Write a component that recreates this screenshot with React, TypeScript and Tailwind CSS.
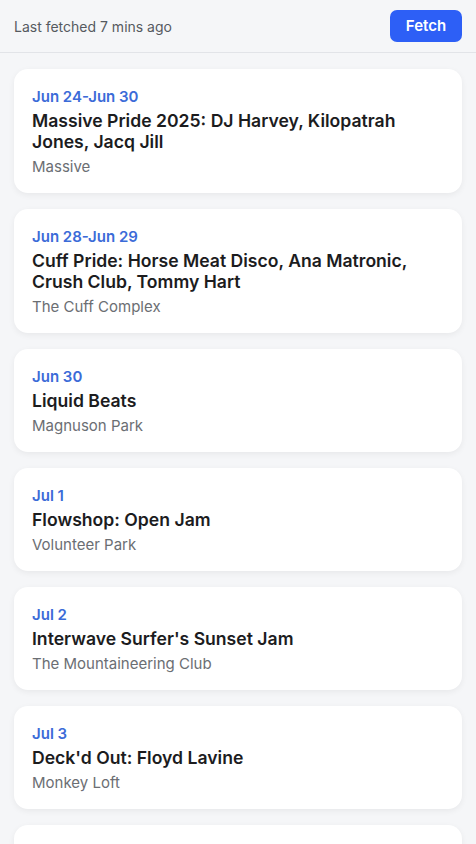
import React from "react";

const events = [
  { date: "Jun 24-Jun 30", title: "Massive Pride 2025: DJ Harvey, Kilopatrah Jones, Jacq Jill", venue: "Massive" },
  { date: "Jun 28-Jun 29", title: "Cuff Pride: Horse Meat Disco, Ana Matronic, Crush Club, Tommy Hart", venue: "The Cuff Complex" },
  { date: "Jun 30", title: "Liquid Beats", venue: "Magnuson Park" },
  { date: "Jul 1", title: "Flowshop: Open Jam", venue: "Volunteer Park" },
  { date: "Jul 2", title: "Interwave Surfer's Sunset Jam", venue: "The Mountaineering Club" },
  { date: "Jul 3", title: "Deck'd Out: Floyd Lavine", venue: "Monkey Loft" },
  { date: "Jul 4", title: "Independence Day Party", venue: "Gas Works Park" },
];

export default function App() {
  return (
    <div
      className="min-h-[844px] bg-[#f5f6f8]"
      style={{ fontFamily: "Inter, 'Noto Sans', sans-serif" }}
    >
      <div className="flex h-[53px] items-center justify-between border-b border-[#e2e4e8] pl-[14px] pr-[14px]">
        <span className="text-[14px] text-[#555a60]">Last fetched 7 mins ago</span>
        <button className="h-[32px] w-[72px] rounded-[7px] bg-[#2d5ff6] text-[15px] font-semibold text-white">
          Fetch
        </button>
      </div>
      <div className="flex flex-col gap-4 px-[14px] pt-4">
        {events.map((e) => (
          <div
            key={e.date + e.title}
            className="rounded-[14px] bg-white px-[18px] pt-[17px] pb-4 shadow-[0_2px_6px_rgba(0,0,0,0.06)]"
          >
            <div className="text-[15px] font-semibold leading-[22px] text-[#3b6bd8]">{e.date}</div>
            <div className="mt-0.5 text-[17.6px] font-semibold leading-[21px] text-[#1c1c1e]">{e.title}</div>
            <div className="mt-1 text-[15px] leading-[21px] text-[#6b6e73]">{e.venue}</div>
          </div>
        ))}
      </div>
    </div>
  );
}
